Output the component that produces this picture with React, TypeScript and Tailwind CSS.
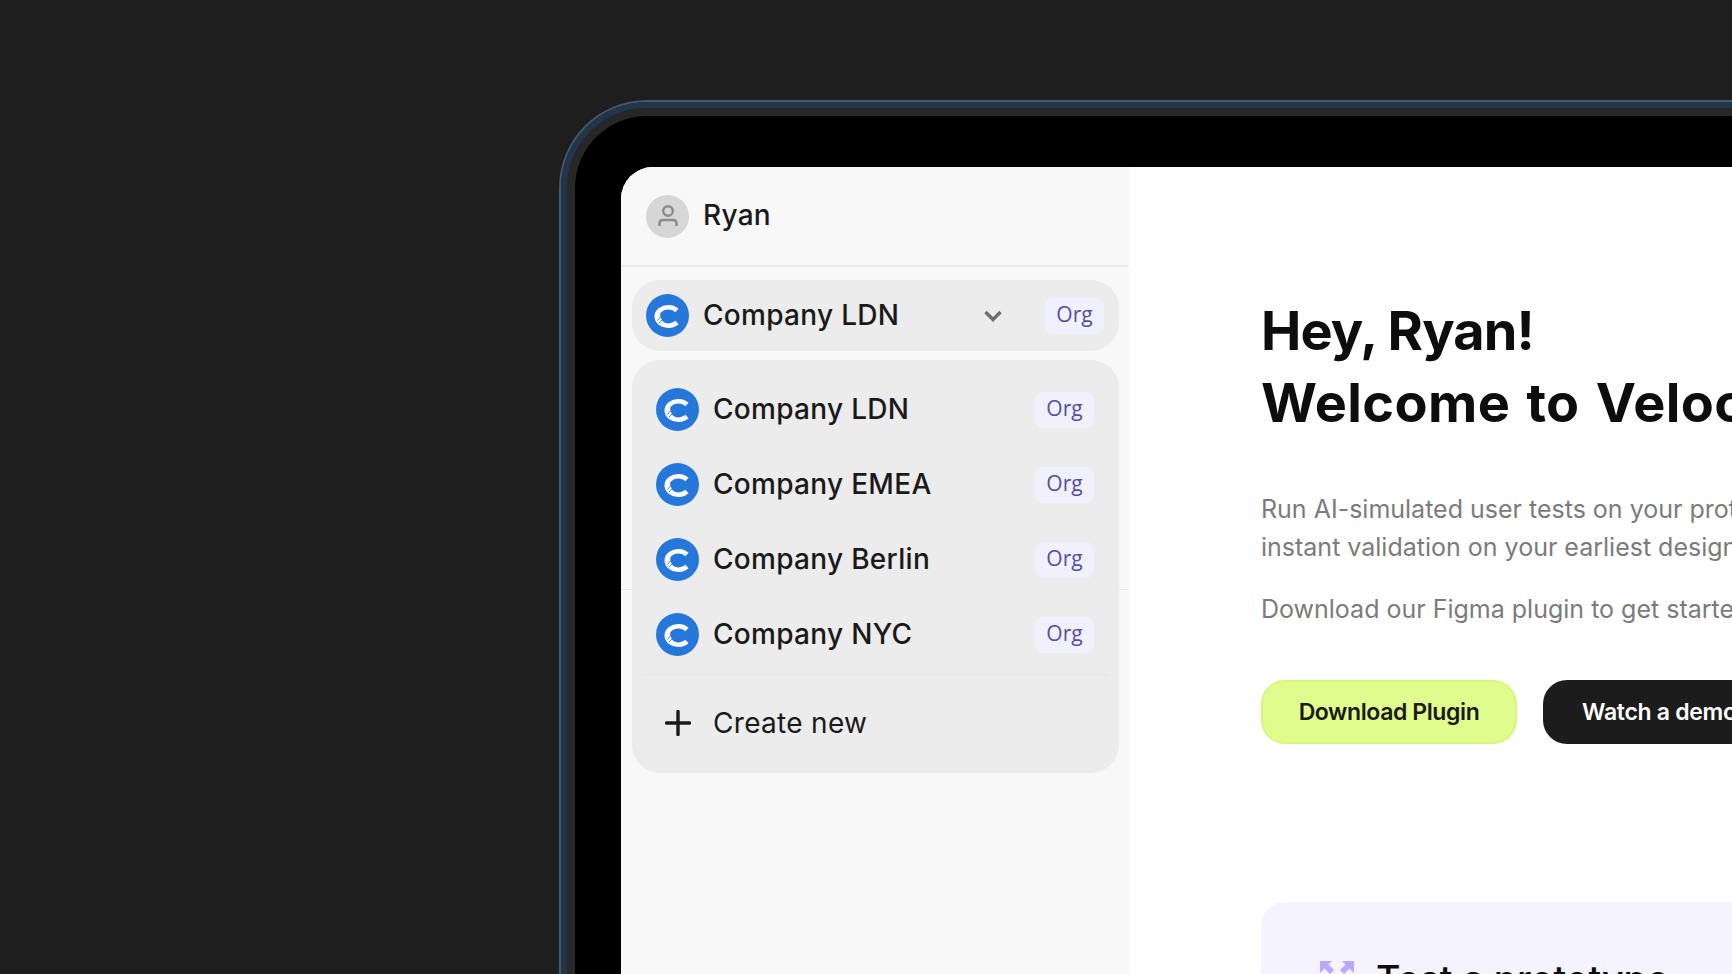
const Logo = () => (
  <svg width="43" height="43" viewBox="0 0 43 43" className="shrink-0">
    <circle cx="21.5" cy="21.5" r="21.5" fill="#2577dc" />
    <path d="M31 16.5A11.5 9.2 0 1 0 31 28.5" stroke="#ffffff" strokeWidth="4.6" fill="none" />
    <path d="M14 16C12 21 13.5 27 18.5 30" stroke="#ffffff" strokeWidth="2" fill="none" />
    <path d="M11.5 26.5C13.5 24 15.5 21 19.5 18.5M13 29C15.5 26.5 17.5 24 22 22" stroke="#2577dc" strokeWidth="0.9" fill="none" />
  </svg>
);

const Badge = () => (
  <span className="w-[59px] h-9 shrink-0 flex items-center justify-center pb-[2px] rounded-lg bg-[#f1f0fd] text-[#544ea6] text-[21px] font-['Open_Sans',sans-serif]">
    Org
  </span>
);

const rows = ["Company LDN", "Company EMEA", "Company Berlin", "Company NYC"];

export default function App() {
  return (
    <div className="w-[1732px] h-[974px] overflow-hidden bg-[#1e1e1e] pl-[559px] pt-[100px] font-['Inter',sans-serif]">
      <div className="w-[1300px] h-[1000px] rounded-tl-[88px] border-l-2 border-t-2 border-[#46586a]">
        <div className="w-full h-full rounded-tl-[86px] border-l-[6px] border-t-[6px] border-[#22354a]">
          <div className="w-full h-full rounded-tl-[80px] border-l-[8px] border-t-[8px] border-[#272727] bg-black pl-[46px] pt-[51px]">
            <div className="w-[1200px] h-[900px] flex rounded-tl-[32px] overflow-hidden bg-white">
              <aside className="w-[508px] shrink-0 relative bg-[#f8f8f8]">
                <div className="h-[100px] flex items-center gap-[14px] pl-[25px] border-b-2 border-[#e9e9e9]">
                  <div className="w-[43px] h-[43px] rounded-full bg-[#d6d6d6] flex items-center justify-center">
                    <svg width="20" height="22" viewBox="0 0 20 22" fill="none" stroke="#8a8a8a" strokeWidth="2.4">
                      <circle cx="10" cy="6" r="4.8" />
                      <path d="M1.5 21V18.5C1.5 16.5 3 15 5 15H15C17 15 18.5 16.5 18.5 18.5V21" />
                    </svg>
                  </div>
                  <span className="pb-[2px] text-[28px] font-medium text-[#1a1a1a] tracking-[0.3px]">Ryan</span>
                </div>

                <div className="ml-[11px] mr-[10px] mt-[13px] h-[71px] rounded-[28px] bg-[#ececec] flex items-center pl-[14px] pr-[15px]">
                  <Logo />
                  <span className="ml-[14px] pb-[2px] flex-1 text-[28px] font-medium text-[#1a1a1a] tracking-[0.3px]">Company LDN</span>
                  <svg width="20" height="14" viewBox="0 0 20 14" fill="none" stroke="#6e6e6e" strokeWidth="3.4" className="mr-[42px]">
                    <path d="M2.5 3L10 10.5L17.5 3" />
                  </svg>
                  <Badge />
                </div>

                <div className="relative z-10 ml-[11px] mr-[10px] mt-[9px] h-[413px] rounded-[28px] bg-[#ececec] px-[10px] pt-[12px]">
                  {rows.map((name) => (
                    <div key={name} className="h-[75px] flex items-center pl-[14px] pr-[15px]">
                      <Logo />
                      <span className="ml-[14px] pb-[2px] flex-1 text-[28px] font-medium text-[#1a1a1a] tracking-[0.3px]">{name}</span>
                      <Badge />
                    </div>
                  ))}
                  <div className="h-0.5 bg-[#e8e8e8] mt-[2px]" />
                  <div className="h-[94px] flex items-center pl-[14px]">
                    <span className="w-[43px] flex justify-center">
                      <svg width="26" height="26" viewBox="0 0 26 26" stroke="#1a1a1a" strokeWidth="3.4" strokeLinecap="round">
                        <path d="M13 1.5V24.5M1.5 13H24.5" />
                      </svg>
                    </span>
                    <span className="ml-[14px] text-[28px] text-[#1a1a1a] tracking-[0.3px]">Create new</span>
                  </div>
                </div>

                <div className="absolute left-0 right-0 top-[422px] h-px bg-[#e6e6e6]" />
              </aside>

              <main className="w-[600px] shrink-0 pl-[132px] pt-[128px]">
                <h1 className="text-[54px] leading-[72px] font-bold text-[#0d0d0d] whitespace-nowrap">
                  <span className="tracking-[-0.9px]">Hey, Ryan!</span>
                  <br />
                  <span className="tracking-[0.4px] [word-spacing:3px]">Welcome to Velocity</span>
                </h1>
                <p className="mt-[51px] text-[25px] leading-[38px] text-[#7b7b7b] whitespace-nowrap">
                  Run AI-simulated user tests on your prototypes
                  <br />
                  instant validation on your earliest designs
                </p>
                <p className="mt-6 text-[25px] leading-[38px] text-[#7b7b7b] whitespace-nowrap">
                  Download our Figma plugin to get started
                </p>
                <div className="mt-[52px] flex gap-[26px]">
                  <button className="w-[256px] h-[64px] shrink-0 rounded-[24px] bg-[#e0fc8c] border-2 border-[#d9f582] text-[23px] font-semibold text-[#1a1a1a] tracking-[-0.4px]">
                    Download Plugin
                  </button>
                  <button className="h-[64px] px-[39px] shrink-0 rounded-[24px] bg-[#1c1c1c] text-[23px] font-semibold text-white tracking-[-0.3px] whitespace-nowrap">
                    Watch a demo
                  </button>
                </div>
                <div className="mt-[158px] w-[700px] h-[200px] rounded-tl-[24px] bg-[#f5f4fe] pl-[59px] pt-[58px] flex gap-[22px]">
                  <svg width="34" height="34" viewBox="0 0 34 34" fill="#b8a8ff" className="shrink-0">
                    <path d="M0 1H12L8.5 4.5L14 10L10 14L4.5 8.5L0 13Z" />
                    <path d="M34 1H22L25.5 4.5L20 10L24 14L29.5 8.5L34 13Z" />
                  </svg>
                  <span className="text-[37.5px] leading-[40px] font-medium text-[#0d0d0d] whitespace-nowrap">Test a prototype</span>
                </div>
              </main>
            </div>
          </div>
        </div>
      </div>
    </div>
  );
}
